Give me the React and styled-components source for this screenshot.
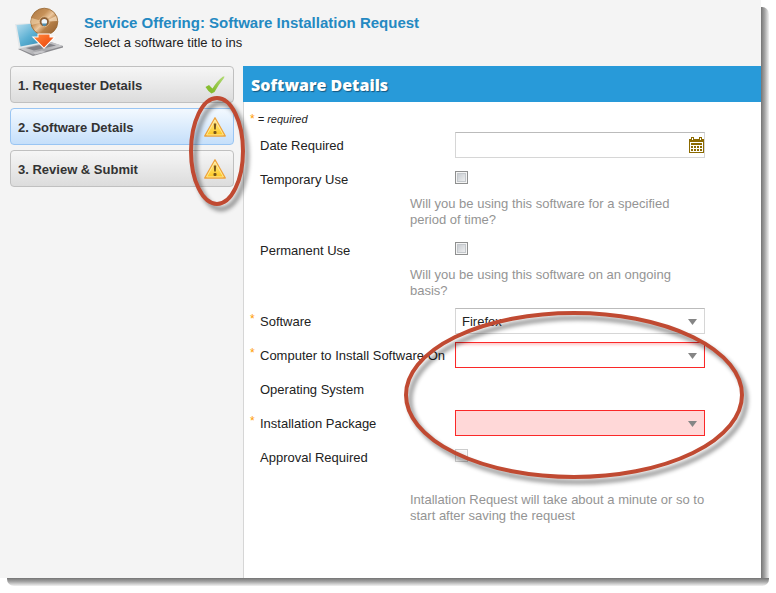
import React, { useId } from "react";
import styled, { createGlobalStyle, css } from "styled-components";

const GlobalStyle = createGlobalStyle`
  * { box-sizing: border-box; }
  body {
    margin: 0;
    background: #fff;
    color: #222;
    font: 13px/16px "Liberation Sans", Arial, sans-serif;
  }
  button, input, select { font: inherit; color: inherit; }
`;

const Window = styled.div`
  position: relative;
  display: flex;
  flex-direction: column;
  min-height: calc(100vh - 15px);
  margin: 0 15px 15px 0;
  background: #f4f4f4;

  &::before, &::after {
    content: "";
    position: absolute;
  }
  &::before {
    top: 7px;
    bottom: 0;
    left: 100%;
    width: 8px;
    border-radius: 0 7px 0 0;
    background: linear-gradient(to right, #747474, #a4a4a4 45%, #f2f2f2);
  }
  &::after {
    top: 100%;
    left: 7px;
    right: -8px;
    height: 8px;
    border-radius: 0 0 7px 7px;
    background: linear-gradient(to bottom, #747474, #a4a4a4 45%, #f2f2f2);
  }
`;

const Header = styled.header`
  display: flex;
  gap: 19px;
  height: 66px;
  padding: 6px 15px;
`;

const Heading = styled.div`
  padding-top: 7px;
`;

const Title = styled.h1`
  margin: 0;
  font-size: 15px;
  line-height: 20px;
  color: #2489c2;
`;

const Subtitle = styled.p`
  margin: 2px 0 0;
`;

const Body = styled.div`
  flex: 1;
  display: grid;
  grid-template-columns: 243px 1fr;
`;

const Steps = styled.nav`
  position: relative;
  display: flex;
  flex-direction: column;
  gap: 5px;
  padding: 0 9px 0 10px;
`;

const Step = styled.button`
  display: flex;
  align-items: center;
  justify-content: space-between;
  height: 37px;
  padding: 2px 7px 0;
  border: 1px solid #c0c0c0;
  border-radius: 4px;
  background: linear-gradient(#f6f6f6, #dcdcdc);
  color: #333;
  font-weight: bold;
  text-align: left;
  ${(p) => p.$active && css`
    border-color: #99c5f3;
    background: linear-gradient(#f3f9ff, #c5dffa);
  `}
`;

const Panel = styled.main`
  position: relative;
  display: flex;
  flex-direction: column;
  background: #fff;
`;

const PanelTitle = styled.h2`
  margin: 0;
  padding: 0 8px;
  background: #289ad9;
  color: #fff;
  font-family: "Open Sans", "Liberation Sans", sans-serif;
  font-size: 16px;
  font-weight: 800;
  line-height: 38px;
  height: 36px;
  text-shadow: 1px 1px 1px #14577f;
`;

const Form = styled.form`
  position: relative;
  flex: 1;
  padding: 9px 6px 20px;
  border-left: 1px solid #d6d6d6;
`;

const Legend = styled.p`
  margin: 0 0 5px;
  font-size: 11px;
  font-style: italic;
`;

const Star = styled.span`
  color: #ff9c00;
  font-size: 12px;
  font-style: normal;
`;

const Row = styled.div`
  display: grid;
  grid-template: 26px / 10px 195px minmax(0, 250px);
  margin-bottom: ${(p) => p.$after}px;
  ${Star} { line-height: 22px; }
`;

const Label = styled.label`
  line-height: 28px;
  white-space: nowrap;
`;

const Hint = styled.p`
  width: 297px;
  margin: 0 0 9px 160px;
  color: #949494;
`;

const Control = styled.div`
  position: relative;
  display: flex;
  align-items: center;
`;

const fieldStyle = css`
  width: 100%;
  height: 26px;
  padding: 1px 6px 0;
  border: 1px solid #d6d6d6;
  border-top-color: #bbb;
  border-radius: 0;
  background: #fff;
  appearance: none;
`;

const TextBox = styled.input`
  ${fieldStyle}
`;

const Select = styled.select`
  ${fieldStyle}
  ${(p) => p.$state === "error" && css`
    border-color: #fa2828;
    box-shadow: inset 0 3px 3px -1px #ffc9c9;
  `}
  ${(p) => p.$state === "empty" && css`
    border-color: #fa2828;
    background: #ffd8d8;
  `}
`;

const Caret = styled.svg`
  position: absolute;
  right: 8px;
  top: 11px;
  pointer-events: none;
`;

const DateButton = styled.button`
  position: absolute;
  right: 0;
  top: 5px;
  width: 17px;
  height: 17px;
  padding: 0;
  border: 0;
  background: none;
  svg { display: block; }
`;

const CheckBox = styled.input`
  appearance: none;
  width: 13px;
  height: 13px;
  margin: 0 0 3px;
  border: 1px solid #8e8f8f;
  background: linear-gradient(135deg, #bfc4ca, #f6f6f6);
  box-shadow: inset 0 0 0 1px #f4f4f4, inset 0 0 0 2px #c4c8cc;
  &:disabled {
    border-color: #ccc;
    background: #f5f5f5;
    box-shadow: inset 0 0 0 1px #fafafa;
  }
`;

const Ring = styled.svg`
  position: absolute;
  z-index: 2;
  overflow: visible;
  pointer-events: none;
  fill: none;
  stroke: #c04a32;
  stroke-width: 4;
  filter: drop-shadow(4px 5px 2px rgba(0, 0, 0, 0.45));
`;

const StepsRing = styled(Ring)`
  left: 189px;
  top: 30px;
`;

const FormRing = styled(Ring)`
  left: 160px;
  top: 209px;
`;

function InstallIcon() {
  return (
    <svg width="50" height="52" viewBox="0 0 50 52" aria-hidden="true">
      <defs>
        <linearGradient id="screen" x1="0" y1="0" x2="1" y2="1">
          <stop offset="0" stopColor="#b9dff0" />
          <stop offset="0.5" stopColor="#5bb0d3" />
          <stop offset="1" stopColor="#2d83ad" />
        </linearGradient>
        <linearGradient id="base" x1="0" y1="0" x2="1" y2="0">
          <stop offset="0" stopColor="#d4d4d6" />
          <stop offset="0.5" stopColor="#a2a2a6" />
          <stop offset="1" stopColor="#d2d2d4" />
        </linearGradient>
        <linearGradient id="disc" x1="0" y1="0" x2="1" y2="1">
          <stop offset="0" stopColor="#a97440" />
          <stop offset="0.35" stopColor="#c79259" />
          <stop offset="0.5" stopColor="#ecc79d" />
          <stop offset="0.65" stopColor="#b57f48" />
          <stop offset="1" stopColor="#8f5c2d" />
        </linearGradient>
        <linearGradient id="arrow" x1="0" y1="0" x2="1" y2="1">
          <stop offset="0" stopColor="#ff8a3c" />
          <stop offset="1" stopColor="#ec3e07" />
        </linearGradient>
      </defs>
      <path d="M3 43 18 50 48 41.500V40L35 36Z" fill="#8b8b8f" />
      <path d="M3 42 35 35.500 48 40 18 48.500Z" fill="url(#base)" />
      <path d="M11 42 34 37.500 41 39.500 19 44.500Z" fill="#818187" />
      <path d="M18 46.500 27 44.500 31 46 20 48.500Z" fill="#c7c7ca" />
      <path d="M0 18 29 16 33 36.500 4 42.500Z" fill="#e4e8ea" />
      <path d="M1.500 19 27 17 31 35.500 5.500 40.500Z" fill="url(#screen)" />
      <circle cx="29.300" cy="15.700" r="13.500" fill="url(#disc)" stroke="#96652f" strokeWidth="0.800" />
      <path d="M29.300 15.700 16.500 12A13 13 0 0 0 16.500 19Z" fill="#f4d8b3" opacity="0.600" />
      <path d="M29.300 15.700 41 10A13 13 0 0 1 42.300 15Z" fill="#f7dfc0" opacity="0.750" />
      <circle cx="29.300" cy="15.700" r="5" fill="#8a5e34" stroke="#e5bf90" strokeWidth="0.800" />
      <circle cx="29.300" cy="15.700" r="2.800" fill="#eff6fa" />
      <path d="M27 17.500 32 17.500 30.500 20 28 20Z" fill="#4f8eae" />
      <path
        d="M23.500 28.500H34.500V31.500H38.500L29 41.500 19 31.500H23.500Z"
        fill="url(#arrow)"
        stroke="#fff"
        strokeWidth="2"
        paintOrder="stroke"
      />
    </svg>
  );
}

function DoneIcon() {
  return (
    <svg width="22" height="22" viewBox="0 0 22 22" role="img" aria-label="Complete">
      <defs>
        <linearGradient id="done" x1="0" y1="1" x2="1" y2="0">
          <stop offset="0.300" stopColor="#86bd30" />
          <stop offset="1" stopColor="#b3db77" />
        </linearGradient>
      </defs>
      <path d="M1.500 12 5 10 8.500 13.500Q13 6 19 1.500H20.500L20 3Q15 9 10.500 17L7.500 18.500Q4.500 17 1.500 12Z" fill="url(#done)" />
    </svg>
  );
}

function WarningIcon() {
  const id = useId();
  return (
    <svg width="22" height="22" viewBox="0 0 22 22" role="img" aria-label="Needs attention">
      <defs>
        <linearGradient id={id} x1="0" y1="0" x2="0" y2="1">
          <stop offset="0" stopColor="#ffe79a" />
          <stop offset="0.600" stopColor="#ffd84f" />
          <stop offset="1" stopColor="#fdc31a" />
        </linearGradient>
      </defs>
      <path d="M11 0.700 21.300 19H0.700Z" fill={`url(#${id})`} stroke="#eda23d" strokeWidth="1.300" strokeLinejoin="round" />
      <path d="M11 3 19.400 17.900H2.600Z" fill="none" stroke="#fff0b8" strokeWidth="0.700" />
      <path d="M9.800 6.500H12.200L11.800 12.500H10.200Z" fill="#77551b" />
      <rect x="9.500" y="14" width="3" height="3" rx="1" fill="#77551b" />
    </svg>
  );
}

function CalendarIcon() {
  return (
    <svg width="17" height="17" viewBox="0 0 17 17" aria-hidden="true">
      <path d="M1 2H16V16H1Z" fill="#8c6a00" />
      <path d="M3 0H6V4H3ZM11 0H14V4H11Z" fill="#8c6a00" />
      <path d="M4 1H5V3H4ZM12 1H13V3H12ZM2 5H15V15H2Z" fill="#fff" />
      <path d="M3 6H14V8H3ZM3 9H5V11H3ZM6 9H8V11H6ZM9 9H11V11H9ZM12 9H14V11H12ZM3 12H5V14H3ZM6 12H8V14H6ZM9 12H11V14H9ZM12 12H14V14H12Z" fill="#8c6a00" />
    </svg>
  );
}

function Field({ id, label, required, after = 8, children }) {
  return (
    <Row $after={after}>
      <Star>{required ? "*" : ""}</Star>
      <Label htmlFor={id}>{label}</Label>
      <Control>{children}</Control>
    </Row>
  );
}

function SelectField({ id, label, state, options }) {
  return (
    <Field id={id} label={label} required>
      <Select id={id} $state={state} required>
        {options.map((option) => (
          <option key={option}>{option}</option>
        ))}
      </Select>
      <Caret width="9" height="6" viewBox="0 0 9 6" aria-hidden="true">
        <path d="M0 0H9L4.500 6Z" fill="#858585" />
      </Caret>
    </Field>
  );
}

export default function App() {
  return (
    <>
      <GlobalStyle />
      <Window>
        <Header>
          <InstallIcon />
          <Heading>
            <Title>Service Offering: Software Installation Request</Title>
            <Subtitle>Select a software title to ins</Subtitle>
          </Heading>
        </Header>
        <Body>
          <Steps aria-label="Request steps">
            <Step type="button">1. Requester Details<DoneIcon /></Step>
            <Step type="button" $active aria-current="step">2. Software Details<WarningIcon /></Step>
            <Step type="button">3. Review &amp; Submit<WarningIcon /></Step>
            <StepsRing width="57" height="110" aria-hidden="true">
              <ellipse cx="28" cy="55" rx="26" ry="53" />
            </StepsRing>
          </Steps>
          <Panel>
            <PanelTitle>Software Details</PanelTitle>
            <Form>
              <Legend><Star>*</Star> = required</Legend>
              <Field id="date" label="Date Required">
                <TextBox id="date" type="text" />
                <DateButton type="button" aria-label="Choose date"><CalendarIcon /></DateButton>
              </Field>
              <Field id="temporary" label="Temporary Use" after={4}>
                <CheckBox id="temporary" type="checkbox" />
              </Field>
              <Hint>Will you be using this software for a specified period of time?</Hint>
              <Field id="permanent" label="Permanent Use" after={4}>
                <CheckBox id="permanent" type="checkbox" />
              </Field>
              <Hint>Will you be using this software on an ongoing basis?</Hint>
              <SelectField id="software" label="Software" options={["Firefox"]} />
              <SelectField id="computer" label="Computer to Install Software On" state="error" options={[""]} />
              <Field id="system" label="Operating System">
                <output id="system" />
              </Field>
              <SelectField id="package" label="Installation Package" state="empty" options={[""]} />
              <Field id="approval" label="Approval Required" after={22}>
                <CheckBox id="approval" type="checkbox" disabled />
              </Field>
              <Hint>Intallation Request will take about a minute or so to start after saving the request</Hint>
              <FormRing width="341" height="168" aria-hidden="true">
                <ellipse cx="170" cy="84" rx="168" ry="82" />
              </FormRing>
            </Form>
          </Panel>
        </Body>
      </Window>
    </>
  );
}
